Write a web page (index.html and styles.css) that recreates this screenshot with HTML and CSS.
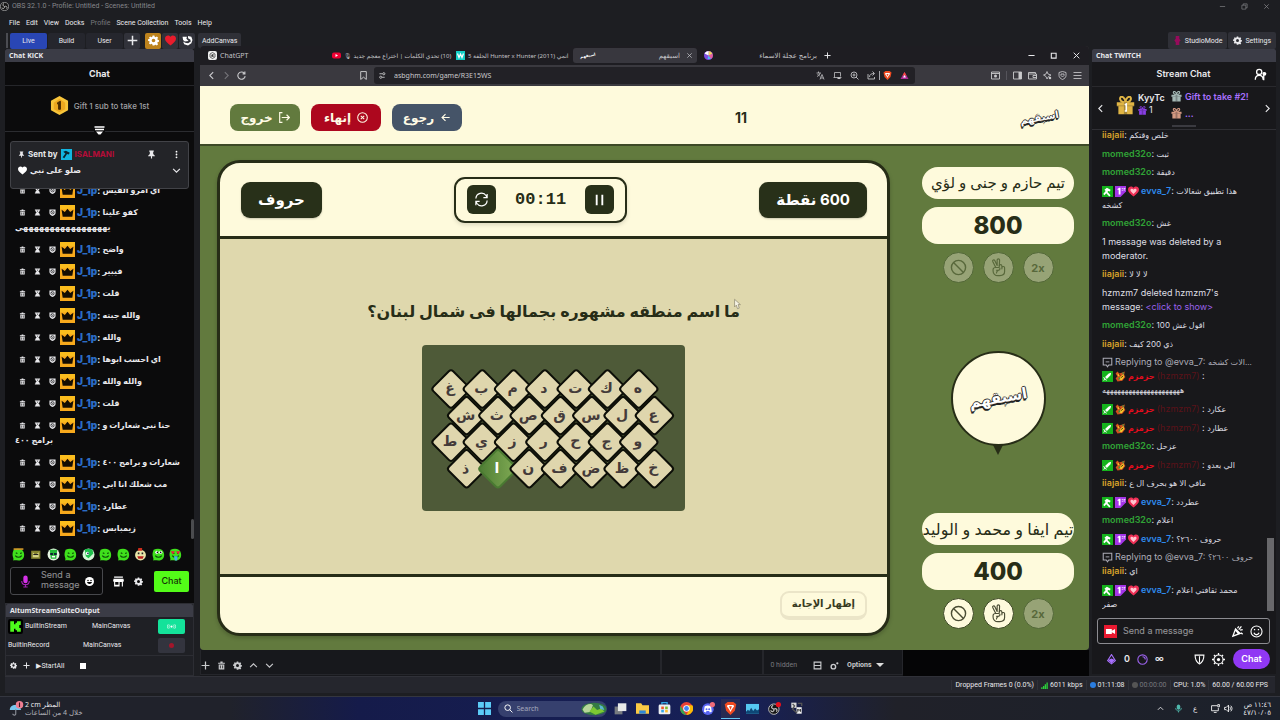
FILE: index.html
```html
<!DOCTYPE html>
<html lang="en">
<head>
<meta charset="utf-8">
<title>OBS 32.1.0 - Profile: Untitled - Scenes: Untitled</title>
<link rel="stylesheet" href="styles.css">
</head>
<body>
<svg class="defs" aria-hidden="true">
  <symbol id="trash" viewBox="0 0 16 16"><path d="M2 3h12v2H2zM6 1h4v2H6zM3 6h10v9H3z" fill="currentColor"/><path d="M6 8v5M10 8v5" stroke="#0b0b0c" stroke-width="1.3"/></symbol>
  <symbol id="hourglass" viewBox="0 0 16 16"><path d="M2 1h12v2h-1c0 3-2 4-3 5 1 1 3 2 3 5h1v2H2v-2h1c0-3 2-4 3-5-1-1-3-2-3-5H2z" fill="currentColor"/><path d="M6 4h4L8 6z" fill="#0b0b0c"/></symbol>
  <symbol id="ban-shield" viewBox="0 0 16 16"><path d="M1 1h14v8c0 3-3 5-7 7-4-2-7-4-7-7z" fill="currentColor"/><circle cx="8" cy="7.500" r="3.800" fill="none" stroke="#0b0b0c" stroke-width="1.500"/><path d="M5.500 5l5 5" stroke="#0b0b0c" stroke-width="1.500"/></symbol>
  <symbol id="crown" viewBox="0 0 28 28"><path d="M0 0h28v28H0z" fill="#f7a91c"/><path d="M0 0h28v8H0z" fill="#fbbd1d"/><path d="M3 9l6 4 5-6 5 6 6-4-2 13H5z" fill="#140d02"/></symbol>
  <symbol id="gear" viewBox="0 0 24 24"><path fill="currentColor" fill-rule="evenodd" d="M10 1h4l.6 3 2 .9 2.600-1.700 2.800 2.800-1.700 2.600.9 2 2.800.6v3.600l-2.800.6-.9 2 1.700 2.600-2.800 2.800-2.600-1.700-2 .9L14 23h-4l-.6-3-2-.9-2.600 1.700L2 18l1.700-2.600-.9-2L0 12.800V9.200l2.800-.6.9-2L2 6l2.800-2.800 2.600 1.700 2-.9zM12 8a4 4 0 100 8 4 4 0 000-8z"/></symbol>
  <symbol id="plus" viewBox="0 0 16 16"><path d="M8 1v14M1 8h14" stroke="currentColor" stroke-width="2.200"/></symbol>
  <symbol id="sword" viewBox="0 0 18 18"><path d="M0 0h18v18H0z" fill="#14b31c"/><path d="M15 3l-1 4-6 6-3-3 6-6zM3 10l5 5-1 1-2-2-2 2-1-1 2-2-2-2z" fill="#fff"/></symbol>
  <symbol id="mod" viewBox="0 0 18 18"><path d="M0 0h18v18H0z" fill="#14b31c"/><path d="M4 6l4-3 6 3-1 3-3-1-1 2 5 5-2 2-5-5-3 3-2-2 4-5z" fill="#fff"/></symbol>
  <symbol id="first" viewBox="0 0 18 18"><path d="M0 0h18v9l-9 9H0z" fill="#a334e8"/><path d="M4 5l3-2h2v11H6V6H4z" fill="#fff"/><path d="M11 4h2m1 0h3M11 7h2m2-3v4" stroke="#fff" stroke-width="1.200"/></symbol>
  <symbol id="heart" viewBox="0 0 18 18"><path d="M9 17C4 13 0 10 0 6c0-5 6-7 9-3 3-4 9-2 9 3 0 4-4 7-9 11z" fill="#ee2f56"/><path d="M9 13C6 10 4 9 4 7c0-3 4-3 5-1 1-2 5-2 5 1 0 2-2 3-5 6z" fill="#ffc5cf"/></symbol>
  <symbol id="dragon" viewBox="0 0 18 18"><path d="M1 4l3-3 3 3 4-1 5-2-1 5 2 4-5 6-8 1-3-5 3-3z" fill="#d4511c"/><path d="M4 4l4 3-3 2zM9 9l5-4 1 5-4 5-4-1z" fill="#f5c62c"/><path d="M6 10l3 2-3 3zM12 2l3 1-2 3z" fill="#2b9b49"/><path d="M7 6l2 1M10 11l3-3" stroke="#281006" stroke-width="1.500"/></symbol>
  <symbol id="reply" viewBox="0 0 18 18"><path d="M2 2h14v11h-5l-2 3-2-3H2z" fill="none" stroke="currentColor" stroke-width="1.700"/><path d="M6 8h6" stroke="currentColor" stroke-width="1.500"/></symbol>
  <symbol id="no" viewBox="0 0 24 24"><circle cx="12" cy="12" r="10" fill="none" stroke="currentColor" stroke-width="2"/><path d="M5 5l14 14" stroke="currentColor" stroke-width="2"/></symbol>
  <symbol id="peace" viewBox="0 0 24 28"><g fill="none" stroke="currentColor" stroke-width="1.700" stroke-linejoin="round" stroke-linecap="round"><path d="M8 14L3.500 5c-.8-2 2-3.200 3-1.300L10 11V3c0-2.300 3.600-2.300 3.600 0l-.4 9"/><path d="M13 12c0-3 4-3 4 0v2c.5-2 4-2 4 .5V20c0 4-3 6-7 6h-3c-4 0-7-3-7-7v-2c0-3 2-3 4-3h4c3 0 3 4 0 4H9m3 0c-2 1-3 2-3 4M17 12v4"/></g></symbol>
  <symbol id="gift" viewBox="0 0 24 24"><path d="M1 8h22v5H1zM3 13h18v10H3z" fill="currentColor"/><path d="M12 8C4 8 4 1 7 1c3 0 5 4 5 7 0-3 2-7 5-7 3 0 3 7-5 7z" fill="none" stroke="currentColor" stroke-width="2.500"/><path d="M10 8h4v15h-4zM1 12h22v1H1z" fill="#18181b" opacity=".3"/></symbol>
  <symbol id="pin" viewBox="0 0 16 16"><path d="M4 1h8v2h-1v4l3 3v1H9v4H7v-4H2v-1l3-3V3H4z" fill="currentColor"/></symbol>
  <symbol id="down" viewBox="0 0 16 16"><path d="M2 5l6 6 6-6" fill="none" stroke="currentColor" stroke-width="2"/></symbol>
  <symbol id="left" viewBox="0 0 16 16"><path d="M11 2L5 8l6 6" fill="none" stroke="currentColor" stroke-width="2"/></symbol>
  <symbol id="close" viewBox="0 0 16 16"><path d="M3 3l10 10M13 3L3 13" stroke="currentColor" stroke-width="1.700"/></symbol>
  <symbol id="blob" viewBox="0 0 24 24"><path d="M3 3c8-3 17-2 19 6 2 9-3 14-10 14-4 0-6-1-10 0 2-4-1-6-1-11 0-4 1-6 2-9z" fill="#3fe01c"/><path d="M7 9l3 1m5 0l3-1" stroke="#0c4a08" stroke-width="2"/><path d="M6 14c3 4 9 4 12 0" fill="none" stroke="#0c4a08" stroke-width="2"/></symbol>
</svg>

<header class="app-head">
  <div class="titlebar">
    <svg class="i9" viewBox="0 0 20 20"><circle cx="10" cy="10" r="9" fill="#151515" stroke="#bbb" stroke-width="1.500"/><path d="M9 3c-4 2-3 6 1 7 4-2 7 1 5 5M10 10c1 4-3 6-6 3" fill="none" stroke="#bbb" stroke-width="2"/></svg>
    <span>OBS 32.1.0 - Profile: Untitled - Scenes: Untitled</span>
    <div class="win"><svg class="i7" viewBox="0 0 16 16"><path d="M2 8h12" stroke="currentColor" stroke-width="1.500"/></svg><svg class="i7" viewBox="0 0 16 16"><path d="M2 5h9v9H2zM5 5V2h9v9h-3" fill="none" stroke="currentColor" stroke-width="1.500"/></svg><svg class="i7"><use href="#close"/></svg></div>
  </div>
  <nav class="menubar"><a href="#">File</a><a href="#">Edit</a><a href="#">View</a><a href="#">Docks</a><a href="#" class="dim">Profile</a><a href="#">Scene Collection</a><a href="#">Tools</a><a href="#">Help</a></nav>
  <div class="toolbar">
    <i class="grip"></i>
    <button class="mode on">Live</button><button class="mode">Build</button><button class="mode">User</button>
    <button class="tool" aria-label="Add"><svg class="i11"><use href="#plus"/></svg></button>
    <button class="tool gold" aria-label="Settings"><svg class="i11"><use href="#gear"/></svg></button>
    <button class="tool" aria-label="Support"><svg class="i11" viewBox="0 0 18 18"><path d="M9 17C4 13 0 10 0 6c0-5 6-7 9-3 3-4 9-2 9 3 0 4-4 7-9 11z" fill="#e81c2c"/></svg></button>
    <button class="tool" aria-label="Aitum"><svg class="i11" viewBox="0 0 20 20"><path d="M1 3h8L8 7l4 4-7 1-3-3zM11 2l6 1 2 6-2 6-6 4-7-2-2-5 4 2 5 1 5-3-1-4-4-2z" fill="#fff"/></svg></button>
    <button class="text-tool">AddCanvas</button>
    <span class="fill"></span>
    <button class="text-tool big"><svg class="i9" viewBox="0 0 16 20"><path d="M4 0h8v6l3 4-3 3v7H4v-6l-3-4 3-4z" fill="#960b5b"/></svg>StudioMode</button>
    <button class="text-tool big"><svg class="i9"><use href="#gear"/></svg>Settings</button>
  </div>
</header>

<main class="workspace">
  <aside class="left-docks">
    <section class="kick">
      <h2 class="dock-title">Chat KICK</h2>
      <h3 class="kick-title">Chat</h3>
      <div class="kick-gift">
        <svg class="i19" viewBox="0 0 20 20"><path d="M10 0l9 5v10l-9 5-9-5V5z" fill="#f8c53a"/><path d="M10 3l6 4v7l-6 3-6-3V7z" fill="#eda81f"/><path d="M8 7l3-1.500V14H9V8L8 8.500z" fill="#4b2c02" stroke="#4b2c02"/></svg>
        Gift 1 sub to take 1st
        <svg class="filter" viewBox="0 0 22 20"><path d="M1 2h20M2 7h18" stroke="#fff" stroke-width="3"/><path d="M4 11h14l-5 6H9z" fill="#fff"/></svg>
      </div>
      <div class="kick-body">
        <div class="pinned">
          <div class="pin-row"><svg class="i7"><use href="#pin"/></svg><b>Sent by</b><svg class="i11" viewBox="0 0 20 20"><path d="M0 0h20v20H0z" fill="#12b5e0"/><path d="M4 5l5-2 7 4-2 3-3-1-5 8-3-2 5-7z" fill="#0a2631"/></svg><b class="red">ISALMANI</b><svg class="i9 push"><use href="#pin"/></svg><svg class="i9" viewBox="0 0 16 16"><g fill="#fff"><circle cx="8" cy="3" r="1.600"/><circle cx="8" cy="8" r="1.600"/><circle cx="8" cy="13" r="1.600"/></g></svg></div>
          <div class="pin-row"><svg class="i9" viewBox="0 0 18 18"><path d="M9 17C4 13 0 10 0 6c0-5 6-7 9-3 3-4 9-2 9 3 0 4-4 7-9 11z" fill="#fff"/></svg><b><bdi>صلو على نبي</bdi></b><svg class="i9 push"><use href="#down"/></svg></div>
        </div>
        <div class="kick-list" id="kick-list"></div>
        <i class="thumb"></i>
      </div>
      <div class="emotes">
        <svg class="i13" viewBox="0 0 24 24"><use href="#blob"/><path d="M3 2h18" stroke="#d59a29" stroke-width="3"/></svg>
        <svg class="i13" viewBox="0 0 24 24"><path d="M4 5h17v15H4z" fill="#85842f"/><path d="M7 8l5 5 6-5v9H7z" fill="#d7d68a"/><path d="M8 12h9" stroke="#222" stroke-width="2"/></svg>
        <svg class="i13" viewBox="0 0 24 24"><circle cx="12" cy="12" r="11" fill="#e6f5e2"/><path d="M5 3h14l-2 17H7z" fill="#25ba38"/><path d="M6 9h5v4H6zm7 0h5v4h-5z" fill="#123"/><path d="M9 16h6" stroke="#fff" stroke-width="3"/></svg>
        <svg class="i13"><use href="#blob"/></svg>
        <svg class="i13" viewBox="0 0 24 24"><circle cx="12" cy="12" r="11" fill="#d5f7d6"/><path d="M5 2h14l2 8-9 9-5-4z" fill="#1fc04c"/><circle cx="10" cy="10" r="3" fill="#fff"/><circle cx="11" cy="10" r="1.500" fill="#124"/></svg>
        <svg class="i13"><use href="#blob"/></svg>
        <svg class="i13"><use href="#blob"/></svg>
        <svg class="i13" viewBox="0 0 24 24"><circle cx="12" cy="13" r="10" fill="#e9e7a8"/><path d="M8 0h7v5H7z" fill="#cc2d1c"/><path d="M6 15h12l-2 5H8z" fill="#b8201c"/><path d="M7 10h3m4 0h3" stroke="#222" stroke-width="3"/></svg>
        <svg class="i13" viewBox="0 0 24 24"><use href="#blob"/><circle cx="9" cy="8" r="3" fill="#fff"/><circle cx="16" cy="8" r="3" fill="#fff"/><circle cx="10" cy="8" r="1.500"/><circle cx="16" cy="8" r="1.500"/></svg>
        <svg class="i13" viewBox="0 0 24 24"><use href="#blob"/><path d="M3 6h8l-4 6zM13 6h8l-4 6z" fill="#e8203e"/><path d="M9 15h7l-1 8h-4z" fill="#42b4e5"/></svg>
      </div>
      <div class="kick-entry">
        <div class="kick-box">
          <svg class="i13" viewBox="0 0 20 24"><rect x="6" y="1" width="8" height="14" rx="4" fill="#d531e8"/><path d="M3 11c0 9 14 9 14 0M10 18v4M6 22h8" fill="none" stroke="#a522b8" stroke-width="2"/></svg>
          <textarea aria-label="Kick message" placeholder="Send a message" rows="2"></textarea>
          <svg class="i9" viewBox="0 0 18 18"><circle cx="9" cy="9" r="9" fill="#fff"/><circle cx="6" cy="7" r="1.500"/><circle cx="12" cy="7" r="1.500"/><path d="M4 10h10c-1 5-9 5-10 0z"/></svg>
        </div>
        <svg class="i11" viewBox="0 0 20 20"><path d="M2 1h16v2H2zM1 5h18l1 5h-2v9h-2v-8h-4v8H2v-9H0zM4 11v5h6v-5z" fill="#fff" fill-rule="evenodd"/></svg>
        <svg class="i9"><use href="#gear"/></svg>
        <button class="kick-send">Chat</button>
      </div>
    </section>
    <section class="output">
      <h2 class="dock-title">AitumStreamSuiteOutput</h2>
      <div class="out-row"><svg class="i15" viewBox="0 0 20 20"><rect width="20" height="20" rx="3"/><path d="M3 3h5v4h2V5h2V3h5v5h-2v4h2v5h-5v-2h-2v-2H8v4H3z" fill="#4dfb1c"/></svg><span class="name">BuiltinStream</span><span>MainCanvas</span><button class="live" aria-label="Stream"><svg class="i9" viewBox="0 0 20 12"><circle cx="10" cy="6" r="2.500" fill="#fff"/><path d="M6 2c-2 2-2 6 0 8M14 2c2 2 2 6 0 8M3 1c-3 3-3 7 0 10M17 1c3 3 3 7 0 10" stroke="#fff" fill="none" stroke-width="1.500"/></svg></button></div>
      <div class="out-row alt"><span class="name">BuiltinRecord</span><span>MainCanvas</span><button class="rec" aria-label="Record"><i></i></button></div>
      <div class="out-foot"><svg class="i7"><use href="#gear"/></svg><svg class="i7"><use href="#plus"/></svg><button class="bare">▶StartAll</button><i class="stop"></i></div>
    </section>
  </aside>

  <div class="center">
    <section class="browser">
      <div class="tabs">
        <div class="tab"><svg class="i9" viewBox="0 0 18 18"><rect width="18" height="18" rx="4" fill="#eee"/><path d="M9 3l5 3v6l-5 3-5-3V6zM9 6v6M6 8l6 3M6 11l6-4" fill="none" stroke="#333" stroke-width="1.400"/></svg><span>ChatGPT</span></div>
        <div class="tab"><svg class="i9" viewBox="0 0 18 18"><rect y="3" width="18" height="12" rx="4" fill="#f00033"/><path d="M7 6l5 3-5 3z" fill="#fff"/></svg><span class="small" dir="rtl">(10) تحدي الكلمات | اختراع معجم جديد 🎙</span></div>
        <div class="tab"><svg class="i9" viewBox="0 0 18 18"><path d="M0 0h18v18H0z" fill="#12cfc7"/><path d="M3 5l3 8 3-7 3 7 3-8" fill="none" stroke="#fff" stroke-width="2.500"/></svg><span class="small" dir="rtl">انمي Hunter x Hunter (2011) الحلقة 5</span></div>
        <div class="tab active"><span class="fav">اسبقهم</span><span class="end">اسبقهم</span><svg class="i7"><use href="#close"/></svg></div>
        <div class="tab"><svg class="i9" viewBox="0 0 18 18"><circle cx="9" cy="9" r="9" fill="#7d4ce0"/><path d="M9 9V0a9 9 0 018 6z" fill="#f2d45c"/><path d="M9 9l8-3a9 9 0 01-3 10z" fill="#e85d9a"/><path d="M9 9L1 5a9 9 0 018-5z" fill="#fff"/><path d="M9 9l5 7H7z" fill="#48bdf0"/></svg><span class="end">برنامج عجلة الاسماء</span></div>
        <svg class="i7 newtab"><use href="#plus"/></svg>
        <div class="win"><svg class="i7" viewBox="0 0 16 16"><path d="M1 8h14" stroke="currentColor" stroke-width="2.500"/></svg><svg class="i7" viewBox="0 0 16 16"><path d="M3 3h11v11H3z" fill="none" stroke="currentColor" stroke-width="2.500"/></svg><svg class="i9"><use href="#close"/></svg></div>
      </div>
      <div class="address">
        <svg class="i9"><use href="#left"/></svg><svg class="i9 faded flip"><use href="#left"/></svg>
        <svg class="i9" viewBox="0 0 16 16"><path d="M13 4a6.500 6.500 0 101.500 5M14 1v4h-4" fill="none" stroke="currentColor" stroke-width="2"/></svg>
        <svg class="i9 mark" viewBox="0 0 16 16"><path d="M3 1h10v14l-5-4-5 4z" fill="none" stroke="currentColor" stroke-width="1.700"/></svg>
        <div class="urlbar">
          <svg class="i7" viewBox="0 0 16 16"><path d="M1 4h7M13 12h-6" stroke="currentColor" stroke-width="2"/><circle cx="11" cy="4" r="2.500" fill="none" stroke="currentColor" stroke-width="2"/><circle cx="4" cy="12" r="2.500" fill="none" stroke="currentColor" stroke-width="2"/></svg>
          <input aria-label="Address" value="asbghm.com/game/R3E15WS">
          <svg class="i9" viewBox="0 0 18 18"><path d="M1 4h9M5 1v3M2 11c4-2 6-4 6-7M3 6l5 5M8 17l4-10 4 10M9 14h6" fill="none" stroke="currentColor" stroke-width="1.500"/></svg>
          <svg class="i9" viewBox="0 0 18 18"><path d="M1 13h16M3 13V3h12v8" fill="none" stroke="currentColor" stroke-width="1.500"/><path d="M9 13h6v3H9z" fill="currentColor"/></svg>
          <svg class="i9" viewBox="0 0 18 18"><circle cx="8" cy="8" r="6" fill="none" stroke="currentColor" stroke-width="1.700"/><path d="M12 12l5 5M5 8h6M8 5v6" stroke="currentColor" stroke-width="1.700"/></svg>
          <svg class="i9" viewBox="0 0 18 18"><path d="M2 6v10h13v-4M5 12c0-5 4-7 9-7M11 1l4 4-4 4" fill="none" stroke="currentColor" stroke-width="1.700"/></svg>
          <i class="bar light"></i>
          <svg class="i9" viewBox="0 0 18 18"><path d="M5 0h8l4 3-2 9-6 6-6-6-2-9z" fill="#f04a20"/><path d="M5 4h8l1 2-3 4-2 4-2-4-3-4z" fill="#fff"/><path d="M7 6l2 5 2-5z" fill="#f04a20"/></svg>
          <svg class="i9" viewBox="0 0 18 18"><path d="M9 2l8 14H1z" fill="#ab2a96"/><path d="M9 2l4 7H5z" fill="#f5483a"/><path d="M9 8l3 5H6z" fill="#fff"/></svg>
        </div>
        <span class="fill"></span>
        <svg class="i9" viewBox="0 0 18 18"><path d="M1 2h16v14H1zM1 5h16" fill="none" stroke="currentColor" stroke-width="1.800"/><circle cx="9" cy="10" r="3" fill="currentColor"/></svg>
        <i class="bar"></i>
        <svg class="i9" viewBox="0 0 18 18"><path d="M1 2h16v14H1z" fill="none" stroke="currentColor" stroke-width="1.800"/><path d="M11 2h6v14h-6z" fill="currentColor"/></svg>
        <svg class="i9" viewBox="0 0 18 18"><path d="M1 3h14v3h2v10H1zM1 6h14M10 9h7v4h-7z" fill="none" stroke="currentColor" stroke-width="1.800"/></svg>
        <svg class="i9" viewBox="0 0 18 18"><path d="M8 1l2 5 6 2-5 3-3 5-2-5-5-3 5-2z" fill="none" stroke="currentColor" stroke-width="1.700"/><circle cx="14" cy="14" r="2.500" fill="currentColor"/></svg>
        <svg class="i9" viewBox="0 0 18 18"><path d="M9 1l7 2v6c0 4-3 6-7 8-4-2-7-4-7-8V3zM6 6h6v3l-3 3-3-3z" fill="none" stroke="currentColor" stroke-width="1.700"/></svg>
        <svg class="i9" viewBox="0 0 18 18"><path d="M1 3h16M1 9h16M1 15h16" stroke="currentColor" stroke-width="1.700"/></svg>
      </div>

      <div class="game" dir="rtl" lang="ar">
        <header class="game-head">
          <div class="logo">اسبقهم</div>
          <strong class="round">11</strong>
          <div class="actions">
            <button class="back"><svg class="i11" viewBox="0 0 16 16"><path d="M14 8H3M8 3L3 8l5 5" fill="none" stroke="currentColor" stroke-width="1.700"/></svg>رجوع</button>
            <button class="finish"><svg class="i11" viewBox="0 0 16 16"><circle cx="8" cy="8" r="7" fill="none" stroke="currentColor" stroke-width="1.500"/><path d="M5.500 5.500l5 5m0-5l-5 5" stroke="currentColor" stroke-width="1.500"/></svg>إنهاء</button>
            <button class="leave"><svg class="i11" viewBox="0 0 16 16"><path d="M5 1H1v14h4M4 8h11M11 4l4 4-4 4" fill="none" stroke="currentColor" stroke-width="1.700"/></svg>خروج</button>
          </div>
        </header>
        <div class="arena">
          <aside class="teams">
            <section class="team">
              <div class="team-name">تيم حازم و جنى و لؤي</div>
              <div class="score">800</div>
              <div class="powers"><button class="used">2x</button><button class="used" aria-label="Peace"><svg class="i19"><use href="#peace"/></svg></button><button class="used" aria-label="Block"><svg class="i17"><use href="#no"/></svg></button></div>
            </section>
            <div class="turn"><div class="logo">اسبقهم</div></div>
            <section class="team">
              <div class="team-name long">تيم ايفا و محمد و الوليد</div>
              <div class="score">400</div>
              <div class="powers"><button class="used">2x</button><button aria-label="Peace"><svg class="i19"><use href="#peace"/></svg></button><button aria-label="Block"><svg class="i17"><use href="#no"/></svg></button></div>
            </section>
          </aside>
          <section class="card">
            <div class="card-head">
              <div class="tag">600 نقطة</div>
              <div class="timer">
                <button aria-label="Pause"><svg class="i15" viewBox="0 0 16 16"><path d="M5 3v11M11 3v11" stroke="#fff" stroke-width="2"/></svg></button>
                <time>00:11</time>
                <button aria-label="Restart"><svg class="i15" viewBox="0 0 16 16"><path d="M2 7a6 6 0 0111-3l1 2M14 2v4h-4M14 9a6 6 0 01-11 3l-1-2M2 14v-4h4" fill="none" stroke="#fff" stroke-width="1.300"/></svg></button>
              </div>
              <div class="tag">حروف</div>
            </div>
            <div class="question">
              <h1>ما اسم منطقه مشهوره بجمالها فى شمال لبنان؟</h1>
              <svg class="board" id="board" viewBox="0 0 263 166" role="img" aria-label="Letter board"><defs><linearGradient id="pick" x1="0" y1="1" x2="1" y2="0"><stop offset="0" stop-color="#4d7c33"/><stop offset="1" stop-color="#82ac55"/></linearGradient></defs></svg>
              <svg class="cursor" viewBox="0 0 12 18"><path d="M1 1v13l3-3 2 6 3-1-2-6h4z" fill="#f6f3e4" stroke="#77725c"/></svg>
            </div>
            <div class="card-foot"><button class="reveal">إظهار الإجابة</button></div>
          </section>
        </div>
      </div>
    </section>
    <div class="under">
      <div class="under-tools"><svg class="i9"><use href="#plus"/></svg><svg class="i9"><use href="#trash"/></svg><svg class="i9"><use href="#gear"/></svg><svg class="i9 up"><use href="#down"/></svg><svg class="i9"><use href="#down"/></svg></div>
      <div class="under-pane"></div>
      <div class="under-end"><span class="dim">0 hidden</span><svg class="i9" viewBox="0 0 16 16"><path d="M2 2h12v12H2zM2 8h12" fill="none" stroke="currentColor" stroke-width="2"/></svg><svg class="i9" viewBox="0 0 16 16"><circle cx="6" cy="10" r="4" fill="none" stroke="currentColor" stroke-width="2.500"/><circle cx="13" cy="4" r="2" fill="currentColor"/></svg><b>Options</b><i class="tri"></i></div>
      <div class="under-void"></div>
    </div>
  </div>

  <aside class="twitch">
    <h2 class="dock-title">Chat TWITCH</h2>
    <div class="tw-title"><h3>Stream Chat</h3><svg class="i13" viewBox="0 0 20 20"><circle cx="8" cy="6" r="4" fill="none" stroke="#fff" stroke-width="2"/><path d="M2 18c0-9 12-9 12 0M15 7v12" fill="none" stroke="#fff" stroke-width="2"/><circle cx="16" cy="9" r="3" fill="#fff"/></svg></div>
    <div class="tw-gift">
      <svg class="i9"><use href="#left"/></svg>
      <svg class="gift-big" viewBox="0 0 24 24"><g color="#e0b545"><use href="#gift"/></g><path d="M11 11l2-1v9h-2" stroke="#fff" stroke-width="2" fill="none"/></svg>
      <div class="gifter"><b>KyyTc</b><span><svg class="i9 violet"><use href="#gift"/></svg>1</span></div>
      <div class="take"><b><svg class="i11 silver"><use href="#gift"/></svg>Gift to take #2!</b><b><svg class="i11 bronze"><use href="#gift"/></svg>...</b></div>
      <svg class="i9 flip push"><use href="#left"/></svg>
      <i class="handle"></i>
    </div>
    <div class="tw-body"><div class="tw-list" id="tw-list"></div><i class="thumb"></i></div>
    <div class="tw-box"><svg class="i13" viewBox="0 0 20 20"><path d="M0 0h20v20H0z" fill="#e91930"/><path d="M3 6h9v3l5-3v8l-5-3v3H3z" fill="#fff"/></svg><input aria-label="Twitch message" placeholder="Send a message"><svg class="i13" viewBox="0 0 20 20"><path d="M3 17l4-11 7 7zM10 5l2-3M14 8l4-1M12 7l4-5M15 12l3 2M7 8l5 6" fill="none" stroke="#fff" stroke-width="2"/></svg><svg class="i13" viewBox="0 0 20 20"><circle cx="10" cy="10" r="8.500" fill="none" stroke="#fff" stroke-width="1.700"/><path d="M6 12c2 4 6 4 8 0M6 7h2M12 7h2" fill="none" stroke="#fff" stroke-width="2"/></svg></div>
    <div class="tw-foot"><svg class="i11" viewBox="0 0 20 20"><path d="M10 1l7 11-7 6-7-6z" fill="none" stroke="#a970ff" stroke-width="2"/><path d="M4 11l6-3 6 3-6 6z" fill="#a970ff"/></svg><b>0</b><svg class="i11" viewBox="0 0 20 20"><circle cx="10" cy="10" r="8.500" fill="none" stroke="#9b62ec" stroke-width="2"/><path d="M10 5a5 5 0 015 5" fill="none" stroke="#9b62ec" stroke-width="2"/></svg><b>∞</b><span class="fill"></span><svg class="i11" viewBox="0 0 20 20"><path d="M2 2h16c0 8-2 13-8 16C4 15 2 10 2 2zM10 4v12" fill="none" stroke="#fff" stroke-width="2"/></svg><svg class="i13" viewBox="0 0 20 20"><circle cx="10" cy="10" r="7" fill="none" stroke="#fff" stroke-width="1.700"/><circle cx="10" cy="10" r="2.500" fill="#fff"/><path d="M10 0v3M10 17v3M0 10h3M17 10h3M3 3l2 2M15 15l2 2M3 17l2-2M15 5l2-2" stroke="#fff" stroke-width="2"/></svg><button class="tw-send">Chat</button></div>
  </aside>
</main>

<footer class="status"><span>Dropped Frames 0 (0.0%)</span><span><svg class="i7" viewBox="0 0 16 16"><path d="M2 12v4M6 9v7M10 5v11M14 1v15" stroke="#2bd43b" stroke-width="3"/></svg>6011 kbps</span><span><i class="dot blue"></i>01:11:08</span><span class="dim"><i class="dot"></i>00:00:00</span><span>CPU: 1.0%</span><span>60.00 / 60.00 FPS</span></footer>

<div class="taskbar">
  <div class="weather"><svg class="i15" viewBox="0 0 20 20"><path d="M1 12c0-9 14-9 15 0z" fill="#76c7ef"/><path d="M9 11v6c0 3-4 2-4 0" fill="none" stroke="#8b8f98" stroke-width="1.500"/><circle cx="14" cy="5" r="5" fill="#ee7f93"/><path d="M14 2v6" stroke="#3b1720" stroke-width="1.500"/></svg><div><div>2 cm <bdi>المطر</bdi></div><div class="soft">خلال 4 من الساعات</div></div></div>
  <div class="apps">
    <svg class="i13" viewBox="0 0 20 20"><path d="M0 0h9v9H0zM11 0h9v9h-9zM0 11h9v9H0zM11 11h9v9h-9z" fill="#5ccbf7"/></svg>
    <label class="search"><svg class="i9" viewBox="0 0 16 16"><circle cx="6.500" cy="6.500" r="5" fill="none" stroke="#fff" stroke-width="1.700"/><path d="M10 10l5 5" stroke="#fff" stroke-width="1.700"/></svg><input aria-label="Search" placeholder="Search"><svg class="lizard" viewBox="0 0 50 26"><ellipse cx="25" cy="13" rx="24" ry="12" fill="#347b43"/><path d="M3 14c5-10 16-13 20-8l-5 13-11 1z" fill="#b7d69a"/><path d="M16 18l8-10 7 7 8-3 6 6-17 6z" fill="#7cc832"/><path d="M35 5l7 3 3 7-8-2z" fill="#5ab7d0"/></svg></label>
    <svg class="i13" viewBox="0 0 20 20"><path d="M1 7h12v12H1z" fill="#777b80"/><path d="M6 2h13v12H6z" fill="#e8eaea"/></svg>
    <svg class="i13" viewBox="0 0 20 20"><path d="M0 2h8l2 3h10v13H0z" fill="#fbca45"/><path d="M5 13h10v5H5z" fill="#2e86d7"/></svg>
    <svg class="i13" viewBox="0 0 20 20"><path d="M6 4V1h8v3" fill="none" stroke="#30a7e6" stroke-width="2"/><rect x="1" y="4" width="18" height="15" rx="2" fill="#eceff3"/><path d="M5 7h4v4H5z" fill="#f05427"/><path d="M11 7h4v4h-4z" fill="#7cbb2d"/><path d="M5 12h4v4H5z" fill="#32a5e7"/><path d="M11 12h4v4h-4z" fill="#f8ba2c"/></svg>
    <svg class="i13" viewBox="0 0 20 20"><circle cx="10" cy="10" r="10" fill="#e94235"/><path d="M1 6l6 10 3 4A10 10 0 011 6z" fill="#34a853"/><path d="M10 5h9a10 10 0 01-9 15l4-8z" fill="#fbbc05"/><circle cx="10" cy="10" r="5" fill="#fff"/><circle cx="10" cy="10" r="3.700" fill="#4285f4"/></svg>
    <svg class="i13" viewBox="0 0 20 20"><circle cx="9" cy="11" r="9" fill="#5865f2"/><path d="M4 7c3-2 7-2 10 0l1 8-3 1-1-2H7l-1 2-3-1z" fill="#fff"/><circle cx="7" cy="11" r="1.500" fill="#5865f2"/><circle cx="11" cy="11" r="1.500" fill="#5865f2"/><circle cx="16" cy="4" r="4" fill="#f06b7b"/></svg>
    <span class="current"><svg class="i13" viewBox="0 0 18 18"><path d="M5 0h8l4 3-2 9-6 6-6-6-2-9z" fill="#f04a20"/><path d="M5 4h8l1 2-3 4-2 4-2-4-3-4z" fill="#fff"/><path d="M7 6l2 5 2-5z" fill="#f04a20"/></svg></span>
    <svg class="i13" viewBox="0 0 20 20"><path d="M0 3h20v15H0z" fill="#55c7f2"/><path d="M0 15l3-3 2 2 3-5 3 5 3-4 3 3 3-2v7H0z" fill="#0e4777"/></svg>
    <svg class="i13" viewBox="0 0 20 20"><circle cx="9" cy="11" r="8" fill="#151515" stroke="#bbb" stroke-width="1.500"/><path d="M8 5c-4 2-3 5 1 6 4-2 6 1 4 4M9 11c1 4-3 5-5 2" fill="none" stroke="#bbb" stroke-width="2"/><circle cx="16" cy="4" r="4" fill="#e8101c"/></svg>
    <svg class="i13" viewBox="0 0 20 20"><path d="M2 1h8v8H2z" fill="#dcdcdc"/><path d="M10 8h8v10h-8z" fill="#f1f1f1"/><path d="M4 3l3 3-3 5 7 6M12 2h6v4" stroke="#555" stroke-width="2" fill="none"/><path d="M12 15v-4l2 2 2-2v4" fill="none" stroke="#222" stroke-width="1.500"/></svg>
  </div>
  <div class="tray"><svg class="i7 up"><use href="#down"/></svg><svg class="i9" viewBox="0 0 16 16"><rect x="5" y="1" width="6" height="9" rx="3" fill="#4fb9ad"/><path d="M3 7c0 7 10 7 10 0M8 12v3" stroke="#4fb9ad" fill="none" stroke-width="1.500"/></svg><span class="lang">ع</span><svg class="i9" viewBox="0 0 16 16"><path d="M11 3H1v9h12V7M5 15h5M12 1h3v4h-3z" fill="none" stroke="#fff" stroke-width="1.500"/></svg><svg class="i9 near" viewBox="0 0 16 16"><path d="M1 6h3l4-4v12l-4-4H1zM10 5c2 2 2 4 0 6M12 3c3 3 3 7 0 10" fill="none" stroke="#fff" stroke-width="1.500"/></svg><div class="clock"><div dir="rtl">١١:٤٦ ص</div><div>٤٧/١٠/٠٥</div></div></div>
</div>
<script src="app.js"></script>
</body>
</html>
```

FILE: app.js
```javascript
const icon = (id, cls = 'i11') => `<svg class="${cls}"><use href="#${id}"/></svg>`;

const kick = [
  'اي امرو القيس', 'كفو علينا|يههههههههههههههههي', 'واضح', 'فيبير', 'قلت', 'والله جبته', 'والله',
  'اي احسب ابوها', 'والله والله', 'قلت', 'حنا نبي شعارات و|برامج ٤٠٠', 'شعارات و برامج ٤٠٠',
  'مب شعلك انا ابي', 'عطارد', 'زيمبابس'
];
document.getElementById('kick-list').innerHTML = kick.map(text => {
  const [first, second] = text.split('|');
  return `<div class="kmsg"><div>${icon('trash', 'i7')}${icon('hourglass', 'i7')}${icon('ban-shield', 'i7')}${icon('crown', 'i15')}<b>J_1p</b>:&nbsp;<bdi>${first}</bdi></div>${second ? `<div><bdi>${second}</bdi></div>` : ''}</div>`;
}).join('');

const users = {
  i: '<b class="u-gold">iiajaii</b>: ',
  m: '<b class="u-green">momed32o</b>: ',
  e: `${icon('mod')}${icon('first')}${icon('heart')}<b class="u-blue">evva_7</b>: `,
  h: `${icon('sword')}${icon('dragon')}<b class="u-red"><bdi>حزمزم</bdi> <span>(hzmzm7)</span></b> : `
};
const twitch = [
  ['i', 'خلص وقتكم'], ['m', 'ثبت'], ['m', 'دقيقة'], ['e', 'هذا تطبيق شغالات|كشخه'], ['m', 'غش'],
  ['', '1 message was deleted by a|moderator.'], ['i', 'لا لا لا'],
  ['', "hzmzm7 deleted hzmzm7's|message: <a href='#'>&lt;click to show&gt;</a>"],
  ['m', 'اقول غش 100'], ['i', 'ذي 200 كيف'],
  ['h', '|هههههههههههههههههههههه', '...الات كشخه'], ['h', 'عكارد'], ['h', 'عطارد'], ['m', 'عزحل'],
  ['h', 'الي بعدو'], ['i', 'مافي الا هو بحرف ال ع'], ['e', 'عطردد'], ['m', 'اعلام'], ['e', 'حروف ٢٦٠٠؟'],
  ['i', 'اي', 'حروف ٢٦٠٠؟'], ['e', 'محمد ثقافتي اعلام|صفر']
];
document.getElementById('tw-list').innerHTML = twitch.map(([user, text, reply]) => {
  const lines = text.split('|').map(line => user ? `<bdi dir="rtl">${line}</bdi>` : line);
  const head = reply ? `<div class="reply">${icon('reply')}Replying to @evva_7: <bdi dir="rtl">${reply}</bdi></div>` : '';
  return `<div class="tmsg">${head}${users[user] || ''}${lines.join('<br>')}</div>`;
}).join('');

const rows = ['غبمدتكه', 'شثصقسلع', 'طيزرحجو', 'ذانفضظخ'];
document.getElementById('board').insertAdjacentHTML('beforeend', rows.map((row, r) =>
  [...row].map((letter, c) => {
    const x = 29 + c * 31.3 + (r % 2) * 15.6;
    const y = 44 + r * 26.6;
    const on = letter === 'ا';
    return `<g${on ? ' class="picked"' : ''}><rect x="${x - 14}" y="${y - 14}" width="28" height="28" rx="3" transform="rotate(45 ${x} ${y})"/><text x="${x - 1}" y="${y + 4}">${letter}</text></g>`;
  }).join('')).join(''));
```

FILE: styles.css
```css
* { box-sizing: border-box; }
body {
  margin: 0;
  min-height: 100vh;
  display: flex;
  flex-direction: column;
  background: #1d1e22;
  color: #e9e9ec;
  font: 7px/10px Roboto, "DejaVu Sans", sans-serif;
  white-space: nowrap;
}
h1, h2, h3 { margin: 0; }
button, input, textarea { font: inherit; color: inherit; border: 0; margin: 0; padding: 0; background: none; outline: 0; }
button { display: flex; align-items: center; justify-content: center; }
svg { flex: none; }
.defs { position: absolute; width: 0; height: 0; }
.i7 { width: 7px; height: 7px; }
.i9 { width: 9px; height: 9px; }
.i11 { width: 11px; height: 11px; }
.i13 { width: 13px; height: 13px; }
.i15 { width: 15px; height: 15px; }
.i17 { width: 17px; height: 17px; }
.i19 { width: 19px; height: 19px; }
.fill { flex: 1; }
.push { margin-left: auto; }
.dim { color: #77787d; }
.faded { opacity: .4; }
.flip { transform: scaleX(-1); }
.up { transform: rotate(180deg); }

/* application header */
.titlebar { display: flex; align-items: center; gap: 3px; height: 12px; color: #85868a; }
.win { display: flex; align-items: center; gap: 15px; margin-left: auto; }
.titlebar .win { padding-right: 10px; }
.menubar { display: flex; align-items: center; gap: 6px; height: 21px; padding-left: 9px; }
.menubar a { color: #ececef; text-decoration: none; }
.menubar .dim { color: #77787d; }
.toolbar { display: flex; align-items: center; gap: 1px; height: 15px; padding: 0 4px 0 6px; }
.grip { width: 2px; height: 15px; background: #4b4c52; margin-right: 1px; }
.mode { width: 37px; height: 16px; background: #25262d; border-radius: 2px; }
.mode.on { background: #2946b5; }
.tool { width: 16px; height: 16px; background: #31323a; border-radius: 2px; }
.tool.gold { background: #bd831c; margin-left: 4px; color: #fff; }
.text-tool { height: 15px; padding: 0 4px; background: #2f3037; border-radius: 2px; gap: 3px; }
.tool + .text-tool { margin-left: 2px; }
.text-tool.big { padding: 0 5px; height: 17px; }

/* docks */
.workspace { flex: 1; display: grid; grid-template-columns: 189px minmax(0, 1fr) 184px; column-gap: 3px; padding: 0 4px 0 5px; }
.left-docks { display: flex; flex-direction: column; margin-top: 1px; }
.center { display: flex; flex-direction: column; margin: -2px 0 0 3px; }
.dock-title { height: 13px; padding-left: 4px; background: #3b3c46; font: bold 7px/13px "Open Sans", sans-serif; border-radius: 2px 2px 0 0; }
.kick { flex: 1; display: flex; flex-direction: column; background: #0b0b0c; }
.kick-title { height: 24px; border-bottom: 1px solid #25262a; font: bold 9px/23px Inter, sans-serif; text-align: center; }
.kick-gift { position: relative; display: flex; align-items: center; justify-content: center; gap: 5px; height: 46px; padding-bottom: 6px; border-bottom: 1px solid #2b2c30; color: #a0a1a5; font: 500 8px/12px Inter, sans-serif; }
.filter { position: absolute; left: calc(50% - 6px); bottom: -5px; width: 11px; height: 10px; background: #0b0b0c; }
.kick-body { position: relative; flex: 1 1 0; min-height: 380px; }
.kick-list { position: absolute; inset: 0; overflow: hidden; display: flex; flex-direction: column; justify-content: flex-end; padding: 0 10px 4px; font: bold 9px/15px Inter, "DejaVu Sans", sans-serif; }
.kmsg { flex: none; margin-bottom: 7px; }
.kmsg:last-child { margin-bottom: 1px; }
.kmsg div { display: flex; align-items: center; height: 15px; }
.kmsg .i7 { margin: 0 4px; }
.kmsg .i15 { margin: 0 2px 0 0; }
.kmsg b { color: #2b6cc4; font-size: 10px; }
.kmsg bdi { font-size: 8px; }
.pinned { position: absolute; z-index: 1; top: 9px; left: 5px; right: 5px; height: 48px; padding: 4px 7px; background: #232428; border: 1px solid #424348; border-radius: 3px; font: 8px/15px Inter, "DejaVu Sans", sans-serif; }
.pin-row { display: flex; align-items: center; gap: 3px; height: 16px; }
.pin-row .push { margin-left: auto; margin-right: 13px; }
.pin-row + .pin-row .push { margin-right: 0; }
.red { color: #b50c38; }
.kick-body .thumb { position: absolute; right: 0; bottom: 2px; width: 3px; height: 20px; background: #4b4c4f; border-radius: 2px; }
.emotes { display: flex; justify-content: space-between; padding: 7px 12px 6px 7px; }
.kick-entry { display: flex; align-items: center; height: 28px; margin: 0 5px 8px 5px; gap: 10px; }
.kick-entry .kick-send { margin-left: 1px; }
.kick-box { display: flex; align-items: center; flex: 1; height: 28px; padding: 0 8px; border: 1px solid #47484c; border-radius: 3px; }
.kick-box textarea { flex: 1; width: 0; margin-left: 9px; height: 22px; padding: 0; resize: none; overflow: hidden; font: 9px/10px Inter, sans-serif; }
::placeholder { color: inherit; opacity: .6; }
.kick-send { width: 35px; height: 21px; background: #53fc18; color: #143307; border-radius: 2px; font: 500 9px/12px Inter, sans-serif; }
.output { border: 1px solid #2c2d33; background: #1f2025; }
.out-row { display: flex; align-items: center; height: 18px; padding: 0 8px 0 2px; }
.out-row .name { width: 67px; }
.out-row > svg { margin-right: 2px; }
.out-row > span:not(.name) { flex: 1; }
.out-row.alt { height: 20px; }
.out-row.alt .name { width: 75px; }
.out-row button { width: 27px; height: 15px; border-radius: 2px; background: #33343e; }
.out-row button.live { background: #14e29a; }
.rec i { width: 5px; height: 5px; border-radius: 50%; background: #a3162b; }
.out-foot { display: flex; align-items: center; gap: 6px; height: 20px; padding-left: 4px; border-top: 1px solid #2c2d33; }
.stop { width: 6px; height: 6px; margin-left: 10px; background: #fff; }

/* browser window */
.browser { flex: 1; display: flex; flex-direction: column; background: #3a393f; border-radius: 4px; overflow: hidden; }
.tabs { display: flex; align-items: center; height: 19px; padding: 0 8px 0 1px; background: #1e1d22; font-family: "Noto Sans", "DejaVu Sans", sans-serif; }
.tab { display: flex; align-items: center; flex: 0 1 124px; min-width: 0; height: 15px; padding: 0 4px 0 7px; gap: 3px; color: #c2c2c6; }
.tab .small { font-size: 6px; }
.tab.active { background: #38373e; border-radius: 3px; }
.tab.active .i7 { margin-left: 3px; }
.tab .end { margin-left: auto; }
.tab .fav { font-weight: bold; font-size: 4px; color: #fff; transform: rotate(-10deg); }
.newtab { margin-left: 3px; }
.address { display: flex; align-items: center; gap: 6px; height: 21px; padding: 0 7px; color: #c9c9cc; }
.mark { margin-left: 107px; }
.urlbar { display: flex; align-items: center; gap: 8px; flex: 0 1 541px; height: 17px; padding: 0 6px 0 5px; background: #222126; border-radius: 3px; }
.urlbar input { flex: 1; min-width: 0; font: 7px/10px "Noto Sans", sans-serif; }
.bar { width: 1px; height: 9px; background: #55545b; }
.bar.light { margin: 0 -5px; background: #a5a5aa; }

/* game page */
.game { flex: 1; display: flex; flex-direction: column; background: #627a3e; color: #272d17; font-family: Inter, "DejaVu Sans", sans-serif; }
.game-head { display: flex; align-items: center; justify-content: space-between; height: 60px; padding: 5px 30px 0; background: #fefadc; border-bottom: 2px solid #3d4926; }
.logo { color: #fff; font: bold 15px/20px "DejaVu Sans", sans-serif; transform: rotate(-10deg); text-shadow: -1px 0 #333, 1px 0 #333, 0 -1px #333, 0 1px #222, -1px 2px #222; }
.game-head .logo { font-size: 10px; }
.round { font-size: 14px; }
.actions { display: flex; gap: 11px; }
.actions button { width: 70px; height: 27px; gap: 6px; border-radius: 8px; color: #fffbe6; font-size: 12px; font-weight: bold; }
.actions .back { background: #455468; }
.actions .finish { background: #ad071e; }
.actions .leave { background: #627a3e; }
.arena { flex: 1; display: flex; gap: 32px; padding: 14px 15px 14px 17px; }
.teams { width: 152px; display: flex; flex-direction: column; justify-content: space-between; align-items: center; padding: 7px 0; }
.team { width: 100%; }
.team-name { display: flex; align-items: center; justify-content: center; height: 32px; overflow: hidden; border-radius: 16px; background: #fefadc; font-size: 15px; line-height: 32px; font-weight: 500; }
.team-name.long { font-size: 16px; }
.score { height: 37px; margin: 8px 0; border-radius: 16px; background: #fefadc; text-align: center; font-size: 24px; line-height: 37px; font-weight: 800; }
.powers { display: flex; justify-content: center; gap: 9px; }
.powers button { width: 31px; height: 31px; border: 1px solid #3d4926; border-radius: 50%; background: #fefadc; color: #4a4c34; }
.powers button.used { background: #97a376; border-color: #536838; color: #58683b; font-size: 11px; font-weight: bold; }
.turn { position: relative; display: flex; align-items: center; justify-content: center; width: 95px; height: 95px; border: 2px solid #272d17; border-radius: 50%; background: #fefadc; }
.turn::after { content: ""; position: absolute; top: 92px; left: calc(50% - 5px); border: 5px solid transparent; border-top: 10px solid #272d17; border-bottom: 0; }
.card { flex: 1; display: flex; flex-direction: column; border: 3px solid #272d17; border-radius: 23px; background: #fefadc; overflow: hidden; box-shadow: 0 2px 4px #0003; }
.card-head { display: flex; align-items: center; justify-content: space-between; height: 76px; padding: 0 20px 0 21px; border-bottom: 3px solid #272d17; }
.tag { height: 36px; padding: 0 17px; border-radius: 9px; background: #283019; color: #fff; font-size: 15px; line-height: 35px; font-weight: bold; box-shadow: 0 1px 2px #0003; }
.timer { display: flex; align-items: center; justify-content: space-between; width: 173px; height: 46px; padding: 0 11px; border: 2px solid #272d17; border-radius: 11px; box-shadow: 0 2px 4px #0002; }
.timer button { width: 29px; height: 29px; border-radius: 6px; background: #283019; }
.timer time { font: bold 17px/24px "Liberation Mono", monospace; }
.question { position: relative; flex: 1; display: flex; flex-direction: column; align-items: center; justify-content: center; gap: 19px; padding-bottom: 7px; background: #dfd8ad; }
.question h1 { font-size: 16px; line-height: 30px; font-weight: bold; }
.board { width: 263px; height: 166px; border-radius: 4px; background: #4e5a38; }
.board rect { fill: #dfd6ad; stroke: #0d0f08; stroke-width: 2px; }
.board text { fill: #443b3a; font: bold 14px "DejaVu Sans", sans-serif; text-anchor: middle; direction: ltr; }
.picked rect { fill: url(#pick); stroke: #4a7a32; }
.board .picked text { fill: #fff; }
.cursor { position: absolute; left: 77%; top: 59px; width: 7px; height: 12px; }
.card-foot { display: flex; align-items: center; height: 59px; padding: 0 20px; border-top: 3px solid #272d17; }
.reveal { height: 29px; padding: 0 10px 2px; border: 2px solid #ebe5c8; border-bottom-width: 4px; border-radius: 9px; color: #373a22; font-size: 10px; font-weight: 600; }

/* strip under the browser */
.under { display: flex; height: 26px; align-items: stretch; background: #17181c; color: #c9cacd; }
.under > div { border: 1px solid #25262b; border-top: 0; margin-bottom: 1px; min-width: 0; }
.under-tools { display: flex; align-items: center; gap: 7px; flex: 467 1 0; padding: 6px 0 0; }
.under-pane { flex: 102 1 0; }
.under-end { display: flex; align-items: center; flex: 131 1 0; gap: 8px; padding: 6px 3px 0 6px; }
.under .under-void { flex: 189 1 0; background: #050506; border: 0; margin: 0; }
.under-end .dim { margin-right: 8px; }
.tri { margin-left: -4px; border: 4px solid transparent; border-top-color: #ddd; border-bottom: 0; }

/* twitch chat */
.twitch { display: flex; flex-direction: column; margin: 1px 0 2px; background: #18181b; font: 9px/14px Inter, "DejaVu Sans", sans-serif; }
.tw-title { display: flex; align-items: center; height: 25px; padding: 0 9px 0 21px; border-bottom: 1px solid #29292d; }
.tw-title h3 { flex: 1; text-align: center; font-size: 9px; font-weight: 600; }
.tw-gift { position: relative; display: flex; align-items: center; height: 43px; padding: 0 4px; border-bottom: 1px solid #2f2f34; }
.gift-big { width: 19px; height: 21px; margin: 0 3px 6px 11px; }
.gifter { width: 30px; padding-bottom: 8px; line-height: 12px; }
.gifter b { font-weight: 600; }
.gifter span { display: flex; align-items: center; gap: 2px; }
.violet { color: #8b3fe8; }
.silver { color: #a4b8b5; }
.bronze { color: #d49a83; }
.take { padding: 0 0 6px 3px; color: #a970ff; }
.take b { display: flex; align-items: center; gap: 3px; height: 17px; font-weight: 600; font-size: 9px; }
.handle { position: absolute; left: 80px; bottom: 2px; width: 24px; height: 2px; background: #3a3a40; }
.tw-body { position: relative; flex: 1 1 0; min-height: 480px; }
.tw-list { position: absolute; inset: -2px 10px 4px; overflow: hidden; display: flex; flex-direction: column; justify-content: space-between; color: #dedee3; }
.tmsg { flex: none; font-size: 9px; line-height: 14px; }
.tmsg bdi { font-size: 8px; }
.tmsg .i11 { vertical-align: -3px; margin-right: 2px; }
.tmsg b { font-weight: 600; }
.tmsg a { color: #9b62ec; text-decoration: none; }
.reply { color: #adadb8; line-height: 13px; }
.u-gold { color: #d6a12a; }
.u-green { color: #30a336; }
.u-blue { color: #2e8bef; }
.u-red { color: #e50c1d; }
.u-red span { color: #5b1219; font-weight: 400; }
.tw-body .thumb { position: absolute; right: 2px; bottom: 4px; width: 7px; height: 73px; background: #68686b; }
.tw-box { display: flex; align-items: center; gap: 6px; height: 26px; margin: 3px 6px 0 5px; padding: 0 6px; border: 1px solid #8c8c91; border-radius: 3px; }
.tw-box input { flex: 1; min-width: 0; font-size: 9px; }
.tw-foot { display: flex; align-items: center; gap: 7px; height: 30px; padding: 0 6px 0 14px; }
.tw-foot b { font-weight: 600; }
.tw-send { width: 37px; height: 20px; margin-left: 1px; border-radius: 10px; background: #9038f4; color: #fff; font-weight: 600; }

/* status bar and taskbar */
.status { display: flex; align-items: center; justify-content: flex-end; height: 17px; margin: 0 5px 3px; padding-right: 4px; background: #25262d; border-top: 1px solid #303138; }
.status span { display: flex; align-items: center; gap: 2px; padding: 0 3px; border-left: 1px solid #303138; }
.dot { width: 6px; height: 6px; border-radius: 50%; background: #555; }
.dot.blue { background: #2a7de0; }
.taskbar { display: grid; grid-template-columns: 1fr auto 1fr; align-items: center; height: 24px; padding: 0 9px; border-top: 1px solid #34363f; background: linear-gradient(90deg, #20222b 18%, #151b4a 28%, #172058 58%, #202129 70%, #1c212b); font-family: "Noto Sans", "DejaVu Sans", sans-serif; }
.weather { display: flex; align-items: center; gap: 1px; line-height: 8px; }
.soft { color: #b2b3ba; }
.apps { display: flex; align-items: center; gap: 9px; }
.search { display: flex; align-items: center; gap: 4px; width: 109px; height: 16px; margin: 0 -2px; padding: 0 0 0 6px; border-radius: 8px; background: #36406e; }
.search input { flex: 1; min-width: 0; }
.lizard { width: 26px; height: 14px; }
.current { display: flex; align-items: center; justify-content: center; width: 19px; height: 20px; margin: 0 -3px; border-bottom: 1px solid #65c5f2; background: #272a51; }
.tray { display: flex; align-items: center; justify-content: flex-end; gap: 10px; }
.lang { margin-right: 4px; }
.near { margin-left: -6px; }
.clock { line-height: 8px; text-align: right; }
```
